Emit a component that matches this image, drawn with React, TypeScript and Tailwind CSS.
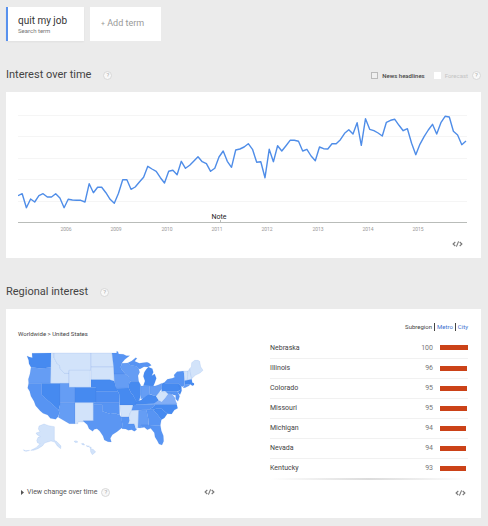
import React from "react";

// Monthly search interest, in chart units measured down from the top of the plot.
const samples = [
  317, 311, 353, 327, 336, 317, 311, 321, 321, 311, 324, 353, 328, 330, 331, 331, 336, 281, 308, 292,
  292, 308, 328, 340, 310, 269, 269, 298, 291, 276, 262, 229, 237, 244, 263, 279, 244, 241, 254, 214,
  235, 226, 213, 200, 215, 221, 244, 235, 201, 183, 214, 232, 180, 177, 171, 161, 178, 217, 215, 263,
  178, 215, 167, 183, 167, 151, 151, 154, 183, 178, 198, 212, 171, 176, 177, 161, 161, 149, 130, 119,
  132, 98, 166, 86, 118, 122, 129, 138, 97, 91, 88, 106, 122, 116, 160, 194, 163, 140, 120, 103, 132,
  98, 79, 81, 124, 135, 164, 153,
];

const years = ["2006", "2009", "2010", "2011", "2012", "2013", "2014", "2015"];
const gridLines = [26, 47, 69, 90, 112];

const regions = [
  { name: "Nebraska", value: 100 },
  { name: "Illinois", value: 96 },
  { name: "Colorado", value: 95 },
  { name: "Missouri", value: 95 },
  { name: "Michigan", value: 94 },
  { name: "Nevada", value: 94 },
  { name: "Kentucky", value: 93 },
];

const LIGHT = "#d2e3fa";
const SOFT = "#82aef6";
const MID = "#659df4";
const BLUE = "#5794f3";
const DEEP = "#468af0";

const states: { id: string; fill: string; d: string }[] = [
  { id: "WA", fill: DEEP, d: "M36 45L43 48 52 50 51 37 108 36 108 79 92 81 72 82 60 80 48 79 42 68 41 58Z" },
  { id: "OR", fill: MID, d: "M48 79L60 80 72 82 92 81 108 79 108 97 107 127 41 127 40 115 45 98Z" },
  { id: "CA", fill: BLUE, d: "M41 127H80V162L131 207 133 217 129 227 122 235 106 232 98 222 84 217 76 210 62 194 57 181 48 166 44 151 38 141Z" },
  { id: "NV", fill: DEEP, d: "M80 127H135V192L131 207 80 162Z" },
  { id: "ID", fill: LIGHT, d: "M108 36H117V50L127 69 133 72 136 84 148 97 162 97V127H107V97Z" },
  { id: "MT", fill: LIGHT, d: "M117 36H228V88H162V97L148 97 136 84 133 72 127 69 117 50Z" },
  { id: "WY", fill: LIGHT, d: "M162 88H226V139H162Z" },
  { id: "UT", fill: MID, d: "M135 127H162V139H180V185H135Z" },
  { id: "CO", fill: DEEP, d: "M180 139H243V185H180Z" },
  { id: "AZ", fill: MID, d: "M135 185H180V248H163L130 229 133 217 131 207 135 192Z" },
  { id: "NM", fill: LIGHT, d: "M180 185H235V239H205V243H189V248H180Z" },
  { id: "ND", fill: LIGHT, d: "M228 36H291L294 56 296 78H228Z" },
  { id: "SD", fill: LIGHT, d: "M228 78H296L297 98 298 121 284 117H228Z" },
  { id: "NE", fill: DEEP, d: "M228 116H284L298 121 303 138 308 151H243V139H228Z" },
  { id: "KS", fill: "#4d8df1", d: "M243 151H308L313 160V185H243Z" },
  { id: "OK", fill: BLUE, d: "M235 185H313L314 222 300 217 286 219 262 211V191H235Z" },
  { id: "TX", fill: "#5b96f3", d: "M235 191H262V211L286 219 300 217 315 223 319 230 322 248 321 260 306 272 292 281 286 292 289 303 279 302 268 297 264 285 254 270 246 263 238 265 233 271 222 263 217 251 205 241V239H235Z" },
  { id: "MN", fill: BLUE, d: "M291 36H305V31L309 32 311 39 325 40 334 44 344 44 330 55 321 65 317 78 319 85 331 99H297L296 78Z" },
  { id: "IA", fill: MID, d: "M297 99H331L339 106 349 118 342 128 341 142 303 142 298 121Z" },
  { id: "MO", fill: DEEP, d: "M303 142L341 141 347 154 354 163 362 177 366 184 361 194 353 196V192H314L313 160Z" },
  { id: "AR", fill: LIGHT, d: "M314 192H353L351 205 345 217 342 228H318V222Z" },
  { id: "LA", fill: BLUE, d: "M318 228H342L344 239 340 248H358L361 257 365 266 358 271 350 266 340 268 332 264 321 263 322 248Z" },
  { id: "MS", fill: LIGHT, d: "M350 208H371L369 260 362 263 358 248H340L344 239 342 228 345 217Z" },
  { id: "AL", fill: MID, d: "M371 208L394 206 400 234 401 252H378L379 260 374 261 369 260Z" },
  { id: "GA", fill: BLUE, d: "M394 206H414L426 219 439 236 436 253 402 255 400 234Z" },
  { id: "FL", fill: BLUE, d: "M378 252H401L403 255 436 253 439 269 445 284 446 301 441 312 432 309 427 299 420 288 418 275 407 262 397 266 388 259 379 260Z" },
  { id: "SC", fill: DEEP, d: "M414 206L423 203H440L457 218 448 231 439 236 426 219Z" },
  { id: "NC", fill: DEEP, d: "M421 190L485 190 488 202 478 207 470 219 457 218 440 203H423L414 206H401L416 197Z" },
  { id: "TN", fill: BLUE, d: "M359 190H421L416 197 401 206 350 208 353 197Z" },
  { id: "KY", fill: DEEP, d: "M361 190L365 181 379 177 388 166 401 159 413 163 423 165 431 178 419 188Z" },
  { id: "VA", fill: SOFT, d: "M413 190L431 178 440 182 451 170 459 158 470 159 479 169 482 180 486 189Z" },
  { id: "WV", fill: LIGHT, d: "M423 166L431 155 440 151 448 154 464 154 459 160 451 170 440 183 431 178Z" },
  { id: "OH", fill: MID, d: "M404 134L420 135 431 131 440 127V144L431 155 423 166 404 159Z" },
  { id: "IN", fill: MID, d: "M377 135L404 134V159L394 165 388 170 377 174Z" },
  { id: "IL", fill: DEEP, d: "M347 121H371L377 132V161L373 178 365 184 354 163 347 154 341 141 342 128 349 119Z" },
  { id: "WI", fill: MID, d: "M321 67L338 66 345 72 363 76 371 83 374 94 369 104 371 121H349L339 106 331 99 319 85 317 78Z" },
  { id: "MI-U", fill: BLUE, d: "M338 66L350 60 362 50 366 52 359 61 373 67 384 65 396 64 402 66 409 73 399 78 387 77 375 84 371 83 363 76 345 72Z" },
  { id: "MI-L", fill: DEEP, d: "M385 134L390 120 385 106 388 94 394 85 400 78 412 83 415 94 410 104 419 99 424 112 419 126 415 135Z" },
  { id: "PA", fill: DEEP, d: "M440 128L449 124V127H491L498 136 496 147 489 151H440Z" },
  { id: "NY", fill: BLUE, d: "M449 124L457 115 472 112 479 109 477 102 486 92 506 90 508 105 509 131 504 137 496 134 491 127H449Z" },
  { id: "NJ", fill: DEEP, d: "M491 134L499 136 500 149 495 161 488 153 496 147Z" },
  { id: "MD", fill: BLUE, d: "M451 151H487L494 166 489 181 482 174 482 163 476 162 470 159 459 158Z" },
  { id: "VT", fill: LIGHT, d: "M506 90H519L517 118 509 119 508 105Z" },
  { id: "NH", fill: LIGHT, d: "M519 90L524 83 529 105 530 114 517 118Z" },
  { id: "MA", fill: DEEP, d: "M509 119L530 115 532 125 537 127 537 132 532 134 526 130 510 131Z" },
  { id: "CT", fill: MID, d: "M509 131L526 130 522 134 510 140 504 140Z" },
  { id: "ME", fill: LIGHT, d: "M524 83L529 77 530 65 539 58 549 58 554 61 557 77 564 88 555 96 541 103 530 113 527 101Z" },
  { id: "AK", fill: LIGHT, d: "M72 255L87 249 101 254 118 257V298L126 302 138 315 137 323 127 315 119 303 108 300 98 303 89 306 82 315 69 323 56 328 47 328 63 320 75 308 68 306 65 299 69 289 76 287 66 281 63 276 75 272 70 264Z" },
  { id: "AK-W", fill: LIGHT, d: "M44 328L35 331 28 330 25 326 31 329Z" },
  { id: "HI", fill: LIGHT, d: "M177 301L183 299 189 303 182 305ZM199 308L205 307 209 312 203 312ZM213 314L223 315 219 318ZM222 317L229 319 227 322ZM226 322L236 326 242 333 232 341 227 333Z" },
];

function Help() {
  return (
    <button
      type="button"
      aria-label="Help"
      className="flex size-[9px] items-center justify-center rounded-full border border-[#d8d8d8] bg-[#f8f8f8] text-[6px] leading-none text-[#aaa]"
    >
      ?
    </button>
  );
}

function Embed() {
  return (
    <button type="button" aria-label="Embed" className="block text-[#777]">
      <svg viewBox="0 0 11 8" className="h-2 w-[11px]" fill="none" stroke="currentColor" strokeWidth="1.1">
        <path d="M3.3 2L1.1 4l2.2 2M7.7 2L9.9 4 7.7 6M6.6 1.4L4.4 6.6" />
      </svg>
    </button>
  );
}

function TrendChart() {
  const step = 448 / (samples.length - 1);
  const points = samples.map((y, i) => `${(i * step).toFixed(1)},${(y / 3).toFixed(1)}`).join(" ");
  return (
    <svg viewBox="0 2 449 142" className="block w-full" role="img" aria-label="Interest over time">
      <g stroke="#f5f5f5">
        {gridLines.map((y) => (
          <path key={y} d={`M0 ${y - 0.5}H449`} />
        ))}
      </g>
      <path d="M0 132.5H449M202.5 130V132" stroke="#b9bcb9" />
      <polyline points={points} fill="none" stroke="#4f8de8" strokeWidth="1.4" strokeLinejoin="round" />
      <text x="201" y="129" textAnchor="middle" fontSize="7" fill="#222">
        Note
      </text>
      <g fontSize="5" fill="#999" textAnchor="middle">
        {years.map((year, i) => (
          <text key={year} x={48 + Math.round(i * 50.3)} y="141">
            {year}
          </text>
        ))}
      </g>
    </svg>
  );
}

function UsMap() {
  return (
    <svg viewBox="0 0 570 345" className="mt-[2px] block h-[115px] w-[190px]" role="img" aria-label="Interest by state">
      <g stroke="#3b78dd" strokeOpacity="0.22" strokeWidth="1.5" strokeLinejoin="round">
        {states.map((s) => (
          <path key={s.id} d={s.d} fill={s.fill} />
        ))}
      </g>
    </svg>
  );
}

export default function App() {
  return (
    <main className="min-h-screen bg-[#ebebeb] px-[6px] pt-[7px] pb-2 font-[Roboto,'Liberation_Sans',sans-serif] text-[#444]">
      <div className="flex gap-[6px]">
        <div className="flex h-[34px] w-[78px] flex-col justify-center border-l-2 border-[#5891ee] bg-white pl-[10px] shadow-xs">
          <div className="text-[10px] leading-3 text-[#333]">quit my job</div>
          <div className="text-[6px] leading-[7px] text-[#777]">Search term</div>
        </div>
        <button type="button" className="h-[34px] w-[71px] bg-white pl-[11px] text-left text-[9px] text-[#999]">
          <span className="text-[7px]">+</span> Add term
        </button>
      </div>

      <header className="mt-6 flex h-5 items-center">
        <h2 className="text-[11px] leading-5">Interest over time</h2>
        <span className="ml-3">
          <Help />
        </span>
        <div className="ml-auto mr-[1px] flex items-center gap-[9px] text-[6px]">
          <label className="flex items-center gap-1 font-medium">
            <input type="checkbox" className="size-[7px] appearance-none border border-[#bbb] bg-[#f0f0f0]" />
            News headlines
          </label>
          <div className="flex items-center gap-1 text-[#c4c4c4]">
            <label className="flex items-center gap-1">
              <input type="checkbox" disabled className="size-[7px] appearance-none bg-white" />
              Forecast
            </label>
            <Help />
          </div>
        </div>
      </header>

      <section className="mr-[1px] mt-[7px] bg-white pr-[14px] pb-[10px] pl-3">
        <TrendChart />
        <div className="mt-[6px] flex justify-end pr-[4px]">
          <Embed />
        </div>
      </section>

      <header className="mt-6 flex h-5 items-center">
        <h2 className="text-[11px] leading-5">Regional interest</h2>
        <span className="ml-3">
          <Help />
        </span>
      </header>

      <section className="mr-[1px] mt-[7px] flex bg-white pt-3 pr-[13px] pb-[21px]">
        <div className="flex w-[252px] flex-col pl-[9px]">
          <p className="mt-2 ml-[3px] text-[6px] leading-[10px]">Worldwide &gt; United States</p>
          <UsMap />
          <div className="mt-auto flex items-center pr-[43px] pl-[6px]">
            <button type="button" className="flex items-center gap-[3px] text-[7px] leading-[10px] text-[#555]">
              <svg viewBox="0 0 3 5" className="h-[5px] w-[3px]">
                <path d="M0 0L3 2.5 0 5Z" fill="#555" />
              </svg>
              View change over time
            </button>
            <span className="ml-1">
              <Help />
            </span>
            <span className="ml-auto">
              <Embed />
            </span>
          </div>
        </div>

        <div className="flex-1 pl-3">
          <nav className="flex items-center justify-end gap-[2px] pt-[2px] text-[6px] leading-2">
            <span>Subregion</span>
            <a href="#metro" className="border-l border-[#444] pl-[2px] text-[#3c72d0]">
              Metro
            </a>
            <a href="#city" className="border-l border-[#444] pl-[2px] text-[#3c72d0]">
              City
            </a>
          </nav>
          <table className="mt-[7px] w-full text-[7px]">
            <tbody>
              {regions.map((r) => (
                <tr key={r.name} className="h-5 border-b border-[#f1f1f1] last:border-0">
                  <th scope="row" className="text-left font-normal">
                    {r.name}
                  </th>
                  <td className="pr-[7px] text-right text-[#777]">{r.value}</td>
                  <td className="w-[28px]">
                    <div className="h-[5px] bg-[#cb4218]" style={{ width: `${r.value}%` }} />
                  </td>
                </tr>
              ))}
            </tbody>
          </table>
          <div className="h-[2px] bg-linear-to-r from-white via-[#dcdcdc] to-white" />
          <div className="mt-[9px] flex justify-end pr-[2px]">
            <Embed />
          </div>
        </div>
      </section>
    </main>
  );
}
